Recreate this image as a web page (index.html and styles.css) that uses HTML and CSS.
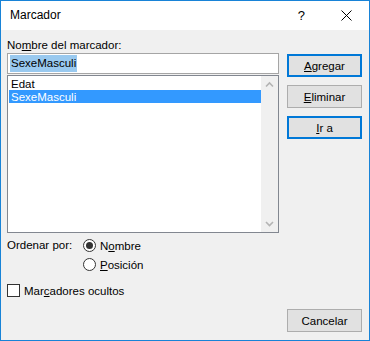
FILE: index.html
```html
<!DOCTYPE html>
<html lang="es">
<head>
<meta charset="utf-8">
<title>Marcador</title>
<link rel="stylesheet" href="styles.css">
</head>
<body>
<div class="window">
  <div class="titlebar">
    <span class="title">Marcador</span>
    <span class="help">?</span>
    <svg class="close" width="11" height="11" viewBox="0 0 11 11"><path d="M0.5 0.5 L10.5 10.5 M10.5 0.5 L0.5 10.5" stroke="#000" stroke-width="1" fill="none"/></svg>
  </div>
  <div class="content">
    <div class="left">
      <div class="label">No<u>m</u>bre del marcador:</div>
      <div class="input"><span class="sel">SexeMasculi</span></div>
      <div class="list">
        <div class="items">
          <div class="item">Edat</div>
          <div class="item selected">SexeMasculi</div>
        </div>
        <div class="scrollbar">
          <svg class="arrow" width="17" height="17" viewBox="0 0 17 17"><path d="M5 10.5 L8.5 7 L12 10.5" stroke="#b4b4b4" stroke-width="1.6" fill="none"/></svg>
          <svg class="arrow" width="17" height="17" viewBox="0 0 17 17"><path d="M5 7 L8.5 10.5 L12 7" stroke="#b4b4b4" stroke-width="1.6" fill="none"/></svg>
        </div>
      </div>
      <div class="sort">
        <span class="sort-label">Ordenar por:</span>
        <div class="options">
          <div class="option"><span class="radio checked"></span><span>N<u>o</u>mbre</span></div>
          <div class="option"><span class="radio"></span><span><u>P</u>osición</span></div>
        </div>
      </div>
      <div class="check-row"><span class="checkbox"></span><span>Mar<u>c</u>adores ocultos</span></div>
    </div>
    <div class="right">
      <button class="btn default"><u>A</u>gregar</button>
      <button class="btn"><u>E</u>liminar</button>
      <button class="btn default"><u>I</u>r a</button>
      <button class="btn cancel">Cancelar</button>
    </div>
  </div>
</div>
</body>
</html>
```
FILE: styles.css
```css
* { box-sizing: border-box; }
html, body { margin: 0; padding: 0; }
body {
  font-family: "Liberation Sans", Arial, sans-serif;
  font-size: 11.5px;
  color: #000;
}
.window {
  width: 370px;
  height: 341px;
  border: 1px solid #1883d7;
  display: flex;
  flex-direction: column;
  background: #f0f0f0;
}
.titlebar {
  height: 29px;
  background: #fff;
  display: flex;
  align-items: center;
  padding-left: 9px;
}
.title {
  font-size: 12px;
  flex: 1;
  padding-bottom: 1px;
}
.help {
  font-size: 13px;
  margin-right: 36px;
  padding-bottom: 1px;
}
.close {
  margin-right: 17px;
  margin-bottom: 1px;
}
.content {
  flex: 1;
  display: flex;
  gap: 8px;
  padding: 7px 7px 8px 6px;
}
.left {
  width: 273px;
  display: flex;
  flex-direction: column;
}
.label {
  height: 16px;
  line-height: 17px;
}
.input {
  height: 21px;
  border: 1px solid #a5a5a5;
  background: #fff;
  padding: 1px 2px;
}
.sel {
  display: inline-block;
  background: #99c9ef;
  height: 17px;
  line-height: 17px;
  padding: 0 1px;
}
.list {
  margin-top: 1px;
  height: 158px;
  border: 1px solid #828790;
  background: #fff;
  display: flex;
}
.items {
  flex: 1;
  padding: 1px 0 0 1px;
}
.item {
  height: 13px;
  line-height: 14px;
  padding-left: 2px;
}
.item.selected {
  background: #3399ff;
  color: #fff;
}
.scrollbar {
  width: 17px;
  background: #f0f0f0;
  display: flex;
  flex-direction: column;
  justify-content: space-between;
}
.arrow { display: block; }
.sort {
  margin-top: 3px;
  display: flex;
}
.sort-label {
  width: 76px;
  line-height: 19px;
}
.option, .check-row {
  height: 19px;
  display: flex;
  align-items: center;
  gap: 4px;
}
.radio {
  width: 13px;
  height: 13px;
  border: 1px solid #333;
  border-radius: 50%;
  background: #fff;
  display: flex;
  align-items: center;
  justify-content: center;
}
.radio.checked::after {
  content: "";
  width: 7px;
  height: 7px;
  border-radius: 50%;
  background: #333;
}
.check-row {
  margin-top: 7px;
}
.checkbox {
  width: 13px;
  height: 13px;
  border: 1px solid #333;
  background: #fff;
}
.right {
  width: 75px;
  display: flex;
  flex-direction: column;
  gap: 8px;
  padding-top: 17px;
}
.btn {
  height: 23px;
  width: 75px;
  font-family: inherit;
  font-size: 11.5px;
  background: #e1e1e1;
  border: 1px solid #adadad;
  padding: 0;
  color: #000;
}
.btn.default {
  border: 2px solid #0078d7;
}
.btn.cancel {
  margin-top: auto;
}
```
